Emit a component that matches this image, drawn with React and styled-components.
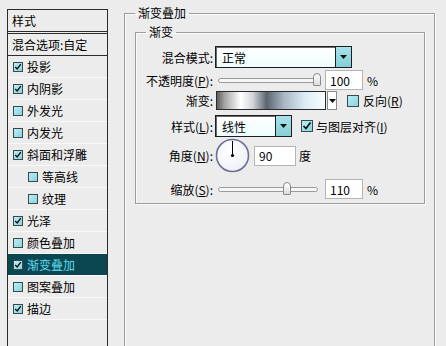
import React from 'react';
import styled, { createGlobalStyle } from 'styled-components';

const Global = createGlobalStyle`
  html, body { margin: 0; padding: 0; background: #ececec; }
  body {
    font-family: "Noto Sans CJK SC", "DejaVu Sans", sans-serif;
    font-size: 12px;
    color: #000;
  }
  #root { width: 446px; height: 346px; overflow: hidden; }
`;

const Screen = styled.div`
  width: 446px;
  height: 346px;
  overflow: hidden;
  display: flex;
  align-items: flex-start;
  background: #ececec;
`;

const StyleList = styled.div`
  margin: 9px 0 0 7px;
  width: 99px;
  height: 400px;
  flex-shrink: 0;
  border: 1px solid #2b2b2b;
  background: #ececec;
`;

const ListHeader = styled.div`
  height: 21px;
  display: flex;
  align-items: center;
  padding-left: 4px;
  border-bottom: 3px double #2b2b2b;
`;

const ListItem = styled.div`
  height: 21px;
  display: flex;
  align-items: center;
  padding-left: ${p => (p.$plain ? 4 : p.$indent ? 20 : 5)}px;
  border-bottom: 1px solid ${p => (p.$dark ? '#2b2b2b' : '#fafafa')};
  background: ${p => (p.$selected ? '#0b4751' : 'transparent')};
  color: ${p => (p.$selected ? '#5fdcec' : '#000')};
  white-space: nowrap;
`;

const Box = styled.span`
  width: ${p => p.$size}px;
  height: ${p => p.$size}px;
  box-sizing: border-box;
  flex-shrink: 0;
  margin-right: ${p => p.$gap}px;
  margin-left: ${p => p.$left || 0}px;
  border: 1px solid #3a4a4c;
  background: linear-gradient(135deg, #b8eef4 0%, #8ad4de 100%);
  display: flex;
  align-items: center;
  justify-content: center;
`;

function Check({ checked, size = 10, gap = 4, left }) {
  return (
    <Box $size={size} $gap={gap} $left={left}>
      {checked && (
        <svg width={size - 2} height={size - 2} viewBox="0 0 10 10">
          <polyline points="1.5,5 4,7.5 8.5,1.5" fill="none" stroke="#0a0a0a" strokeWidth="1.6" />
        </svg>
      )}
    </Box>
  );
}

const Panel = styled.fieldset`
  margin: 5px 0 0 16px;
  padding: 3px 9px 0 10px;
  width: 290px;
  height: 400px;
  border: 1px solid #9c9c9c;
  box-shadow: inset 1px 1px 0 #fbfbfb, 1px 1px 0 #fbfbfb;
  flex-shrink: 0;
`;

const Group = styled.fieldset`
  margin: 0;
  padding: 6px 0 4px 0;
  border: 1px solid #9c9c9c;
  box-shadow: inset 1px 1px 0 #fbfbfb, 1px 1px 0 #fbfbfb;
`;

const Legend = styled.legend`
  padding: 0 3px;
  margin-left: ${p => p.$offset}px;
  line-height: 16px;
`;

const Row = styled.div`
  display: flex;
  align-items: center;
  height: ${p => p.$h}px;
  margin-top: ${p => p.$mt || 0}px;
`;

const Label = styled.div`
  width: 77px;
  margin-right: 2px;
  text-align: right;
  flex-shrink: 0;
  white-space: nowrap;
`;

const Select = styled.div`
  width: ${p => p.$w}px;
  height: 22px;
  box-sizing: border-box;
  border: 1px solid #1e1e1e;
  box-shadow: inset 1px 1px 0 #6a6a6a;
  background: linear-gradient(180deg, #ffffff 0%, #eefcfd 100%);
  display: flex;
  align-items: stretch;
`;

const SelectText = styled.div`
  flex: 1;
  padding-left: 6px;
  display: flex;
  align-items: center;
`;

const SelectButton = styled.div`
  width: 15px;
  border-left: 1px solid #1e1e1e;
  background: linear-gradient(180deg, #a6e2ea 0%, #86cfd9 100%);
  display: flex;
  align-items: center;
  justify-content: center;
`;

const Arrow = () => (
  <svg width="7" height="4" viewBox="0 0 7 4">
    <polygon points="0,0 7,0 3.5,4" fill="#111" />
  </svg>
);

const Slider = styled.div`
  position: relative;
  width: 106px;
  height: 20px;
  display: flex;
  align-items: center;
  padding: 0 3px;
  box-sizing: border-box;
`;

const Track = styled.div`
  flex: 1;
  height: 3px;
  border: 1px solid #9a9a9a;
  border-radius: 3px;
  background: #f6f6f6;
`;

const Thumb = styled.div`
  position: absolute;
  top: 3px;
  left: ${p => p.$at}px;
  width: 8px;
  height: 13px;
  box-sizing: border-box;
  border: 1px solid #8a8a8a;
  border-radius: 4px 4px 1px 1px;
  background: linear-gradient(180deg, #ffffff 0%, #dcdcdc 100%);
`;

const Field = styled.div`
  width: ${p => p.$w}px;
  height: 20px;
  box-sizing: border-box;
  margin-left: ${p => p.$ml}px;
  border: 1px solid #b4b4b4;
  background: #fff;
  padding-left: 4px;
  display: flex;
  align-items: center;
`;

const Unit = styled.span`
  margin-left: ${p => p.$ml}px;
`;

const GradientBar = styled.div`
  width: 110px;
  height: 19px;
  box-sizing: border-box;
  margin-left: 1px;
  border: 1px solid #2a2a2a;
  background: linear-gradient(90deg, #5e5e5e 0%, #a4a4a4 7%, #ffffff 22%, #d3d6d9 33%, #5b6570 46%, #a9b7c2 62%, #dcecf4 82%, #f8feff 100%);
`;

const GradientArrow = styled.div`
  width: 10px;
  height: 19px;
  box-sizing: border-box;
  margin-left: 1px;
  border: 1px solid #8a8a8a;
  background: #fff;
  display: flex;
  align-items: center;
  justify-content: center;
`;

const CheckLabel = styled.span`
  white-space: nowrap;
`;

const Dial = () => (
  <svg width="35" height="35" viewBox="0 0 35 35">
    <defs>
      <radialGradient id="dialFill" cx="0.4" cy="0.35" r="0.7">
        <stop offset="0" stopColor="#ffffff" />
        <stop offset="1" stopColor="#eef0f6" />
      </radialGradient>
    </defs>
    <circle cx="17.5" cy="17.5" r="16" fill="url(#dialFill)" stroke="#6b6f96" strokeWidth="1.6" />
    <line x1="17.5" y1="17.5" x2="17.5" y2="3" stroke="#000" strokeWidth="1" />
    <circle cx="17.5" cy="17.5" r="1.6" fill="#000" />
  </svg>
);

const effects = [
  { name: '投影', checked: true },
  { name: '内阴影', checked: true },
  { name: '外发光' },
  { name: '内发光' },
  { name: '斜面和浮雕', checked: true },
  { name: '等高线', indent: true },
  { name: '纹理', indent: true },
  { name: '光泽', checked: true },
  { name: '颜色叠加' },
  { name: '渐变叠加', checked: true, selected: true },
  { name: '图案叠加' },
  { name: '描边', checked: true },
];

export default function App() {
  return (
    <Screen>
      <Global />
      <StyleList>
        <ListHeader>样式</ListHeader>
        <ListItem $plain $dark>混合选项:自定</ListItem>
        {effects.map(e => (
          <ListItem key={e.name} $indent={e.indent} $selected={e.selected}>
            <Check checked={e.checked} />
            {e.name}
          </ListItem>
        ))}
      </StyleList>

      <Panel>
        <Legend $offset={0}>渐变叠加</Legend>
        <Group>
          <Legend $offset={10}>渐变</Legend>

          <Row $h={22}>
            <Label>混合模式:</Label>
            <Select $w={137}>
              <SelectText>正常</SelectText>
              <SelectButton><Arrow /></SelectButton>
            </Select>
          </Row>

          <Row $h={20} $mt={2}>
            <Label>不透明度(<u>P</u>):</Label>
            <Slider>
              <Track />
              <Thumb $at={98} />
            </Slider>
            <Field $w={38} $ml={4}>100</Field>
            <Unit $ml={4}>%</Unit>
          </Row>

          <Row $h={19} $mt={1}>
            <Label>渐变:</Label>
            <GradientBar />
            <GradientArrow><Arrow /></GradientArrow>
            <Check size={12} gap={4} left={10} />
            <CheckLabel>反向(<u>R</u>)</CheckLabel>
          </Row>

          <Row $h={22} $mt={5}>
            <Label>样式(<u>L</u>):</Label>
            <Select $w={77}>
              <SelectText>线性</SelectText>
              <SelectButton><Arrow /></SelectButton>
            </Select>
            <Check checked size={12} gap={3} left={9} />
            <CheckLabel>与图层对齐(<u>I</u>)</CheckLabel>
          </Row>

          <Row $h={35} $mt={1}>
            <Label>角度(<u>N</u>):</Label>
            <Dial />
            <Field $w={42} $ml={4}>90</Field>
            <Unit $ml={3}>度</Unit>
          </Row>

          <Row $h={20} $mt={6}>
            <Label>缩放(<u>S</u>):</Label>
            <Slider>
              <Track />
              <Thumb $at={68} />
            </Slider>
            <Field $w={38} $ml={4}>110</Field>
            <Unit $ml={4}>%</Unit>
          </Row>
        </Group>
      </Panel>
    </Screen>
  );
}
